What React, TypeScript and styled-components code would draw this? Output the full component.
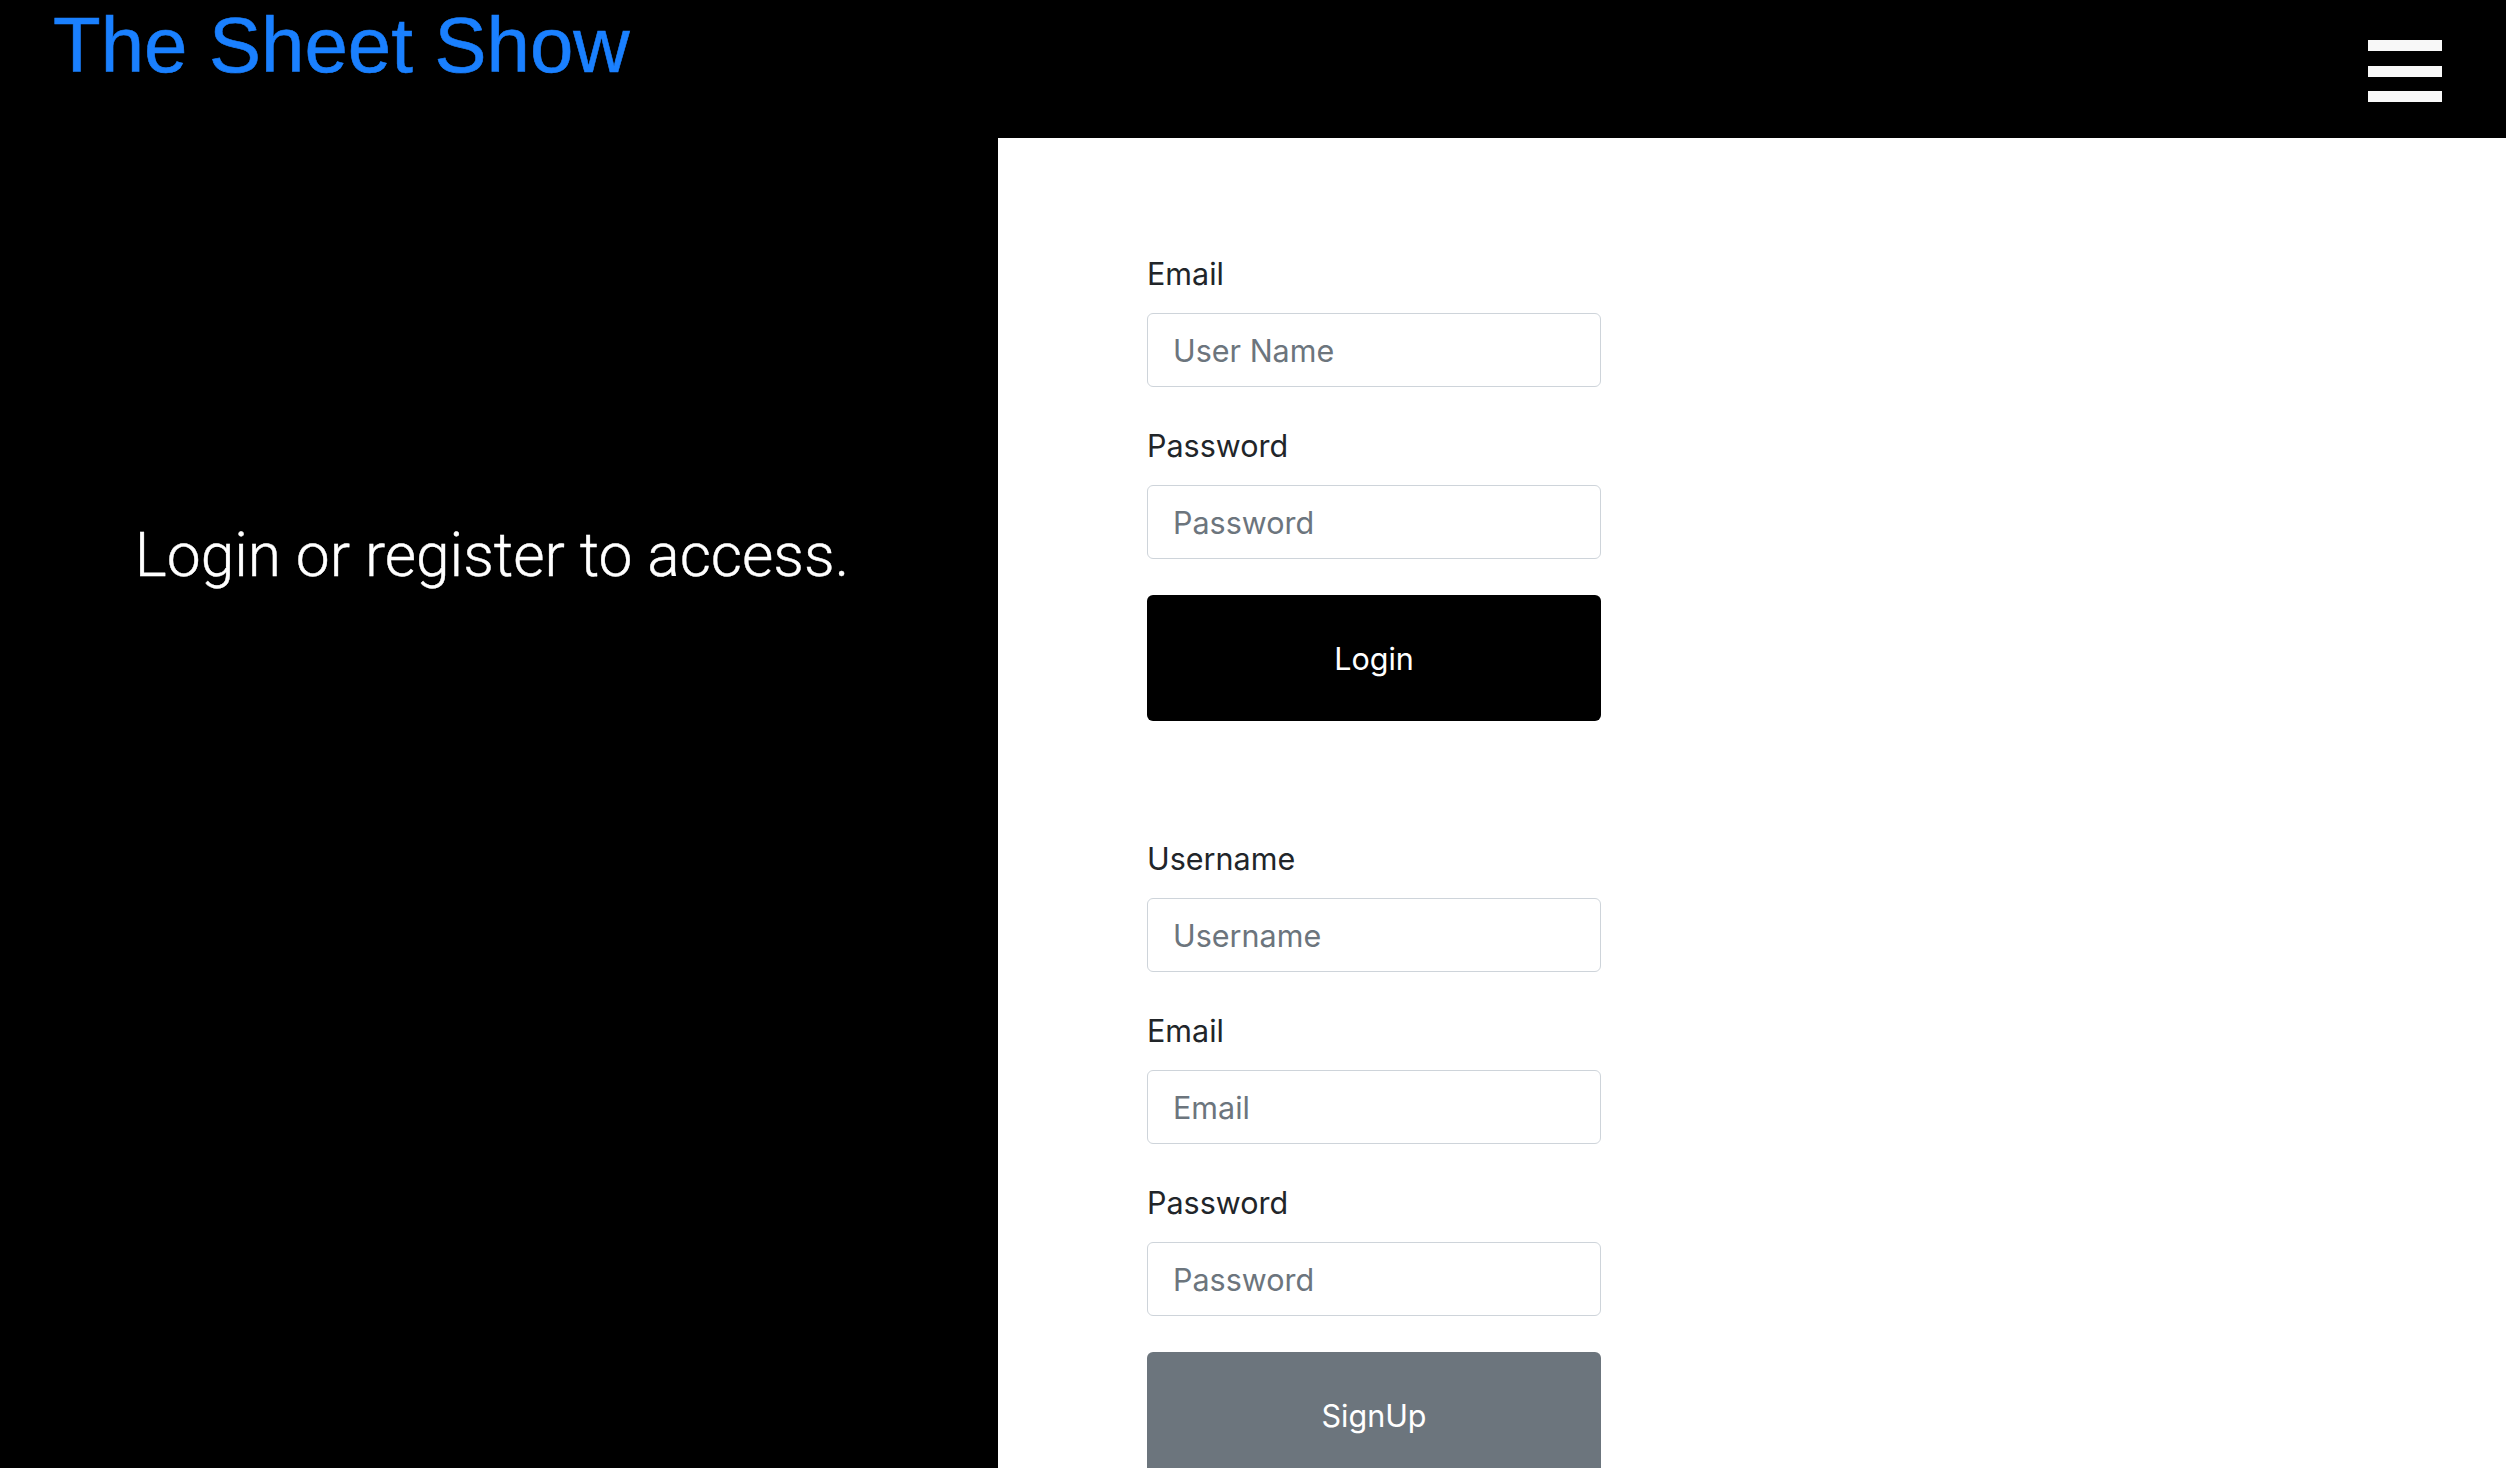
import React from "react";
import styled, { createGlobalStyle } from "styled-components";

const GlobalStyle = createGlobalStyle`
  html, body {
    margin: 0;
    padding: 0;
    background: #000;
  }
  * { box-sizing: border-box; }
`;

const Page = styled.div`
  min-height: 100vh;
  background: #000;
  display: flex;
  flex-direction: column;
`;

const Header = styled.header`
  height: 138px;
  background: #000;
  display: flex;
  justify-content: space-between;
  align-items: flex-start;
  padding: 0 64px 0 53px;
`;

const Brand = styled.a`
  font-family: "Liberation Sans", Arial, sans-serif;
  font-size: 78px;
  line-height: normal;
  color: #1a80ff;
  text-decoration: none;
  white-space: nowrap;
  -webkit-text-stroke: 0.6px #1a80ff;
`;

const MenuButton = styled.button`
  margin-top: 40px;
  width: 74px;
  height: 62px;
  padding: 0;
  border: 0;
  background: transparent;
  display: flex;
  flex-direction: column;
  justify-content: space-between;
  cursor: pointer;
`;

const MenuBar = styled.span`
  display: block;
  height: 11px;
  width: 100%;
  background: #f8f8f8;
`;

const Main = styled.main`
  flex: 1;
  display: flex;
`;

const InfoPanel = styled.section`
  width: 998px;
  flex: none;
  background: #000;
  padding: 382px 14px 0 0;
  text-align: center;
`;

const InfoText = styled.h2`
  margin: 0;
  font-family: Roboto, "Liberation Sans", sans-serif;
  font-weight: 300;
  font-size: 60.5px;
  line-height: normal;
  color: #fff;
  white-space: nowrap;
  -webkit-text-stroke: 0.4px #fff;
`;

const FormPanel = styled.section`
  flex: 1;
  background: #fff;
  padding: 113px 0 0 149px;
  min-height: calc(100vh - 138px);
`;

const Form = styled.form<{ $last?: boolean }>`
  width: 454px;
  display: flex;
  flex-direction: column;
  margin-bottom: ${(p) => (p.$last ? "0" : "115px")};
`;

const FieldGroup = styled.div`
  display: flex;
  flex-direction: column;
  margin-bottom: 36px;
`;

const Label = styled.label`
  font-family: Inter, "Liberation Sans", sans-serif;
  font-size: 30.5px;
  line-height: 45px;
  color: #212529;
  margin-bottom: 17px;
`;

const Input = styled.input`
  height: 74px;
  width: 100%;
  padding: 0 25px;
  font-family: Inter, "Liberation Sans", sans-serif;
  font-size: 30.5px;
  color: #495057;
  background: #fff;
  border: 1.5px solid #ced4da;
  border-radius: 6px;
  outline: none;

  &::placeholder {
    color: #6c757d;
  }
`;

const SubmitButton = styled.button<{ $variant: "dark" | "secondary" }>`
  height: 126px;
  width: 100%;
  border: 0;
  border-radius: 6px;
  font-family: Inter, "Liberation Sans", sans-serif;
  font-size: 30.5px;
  color: #fff;
  background: ${(p) => (p.$variant === "dark" ? "#000" : "#6c757d")};
  cursor: pointer;
`;

type Field = { label: string; placeholder: string; type: string };

const loginFields: Field[] = [
  { label: "Email", placeholder: "User Name", type: "text" },
  { label: "Password", placeholder: "Password", type: "password" },
];

const signupFields: Field[] = [
  { label: "Username", placeholder: "Username", type: "text" },
  { label: "Email", placeholder: "Email", type: "email" },
  { label: "Password", placeholder: "Password", type: "password" },
];

function Fields({ fields, prefix }: { fields: Field[]; prefix: string }) {
  return (
    <>
      {fields.map((f) => (
        <FieldGroup key={f.label}>
          <Label htmlFor={`${prefix}-${f.label}`}>{f.label}</Label>
          <Input id={`${prefix}-${f.label}`} type={f.type} placeholder={f.placeholder} />
        </FieldGroup>
      ))}
    </>
  );
}

export default function App() {
  return (
    <>
      <GlobalStyle />
      <Page>
        <Header>
          <Brand href="#">The Sheet Show</Brand>
          <MenuButton aria-label="Menu">
            <MenuBar />
            <MenuBar />
            <MenuBar />
          </MenuButton>
        </Header>
        <Main>
          <InfoPanel>
            <InfoText>Login or register to access.</InfoText>
          </InfoPanel>
          <FormPanel>
            <Form onSubmit={(e) => e.preventDefault()}>
              <Fields fields={loginFields} prefix="login" />
              <SubmitButton $variant="dark" type="submit">Login</SubmitButton>
            </Form>
            <Form $last onSubmit={(e) => e.preventDefault()}>
              <Fields fields={signupFields} prefix="signup" />
              <SubmitButton $variant="secondary" type="submit">SignUp</SubmitButton>
            </Form>
          </FormPanel>
        </Main>
      </Page>
    </>
  );
}
